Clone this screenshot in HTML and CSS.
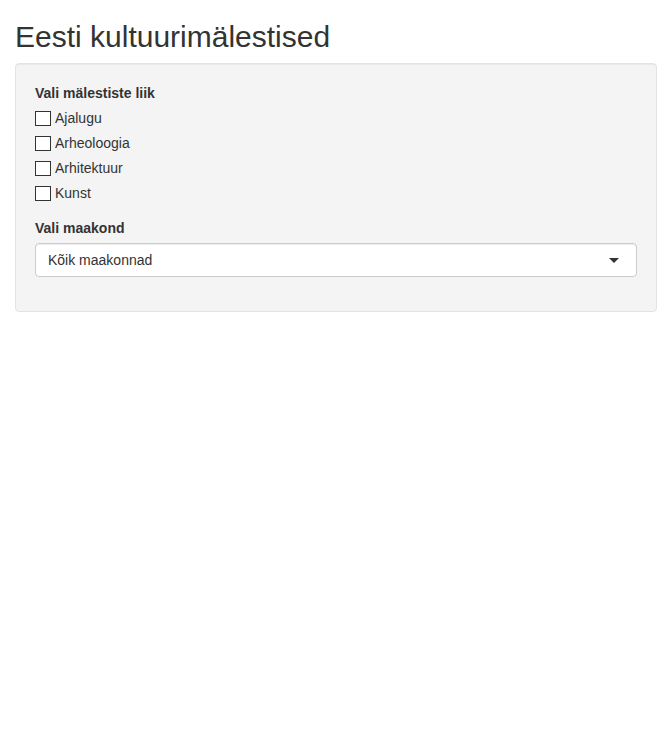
FILE: index.html
```html
<!DOCTYPE html>
<html lang="et">
<head>
<meta charset="utf-8">
<title>Eesti kultuurimälestised</title>
<link rel="stylesheet" href="styles.css">
</head>
<body>
<div class="container">
  <h2 class="title">Eesti kultuurimälestised</h2>
  <div class="well">
    <div class="form-group">
      <label class="control-label">Vali mälestiste liik</label>
      <div class="options">
        <label class="checkbox"><input type="checkbox"><span>Ajalugu</span></label>
        <label class="checkbox"><input type="checkbox"><span>Arheoloogia</span></label>
        <label class="checkbox"><input type="checkbox"><span>Arhitektuur</span></label>
        <label class="checkbox"><input type="checkbox"><span>Kunst</span></label>
      </div>
    </div>
    <div class="form-group">
      <label class="control-label">Vali maakond</label>
      <div class="select">
        <span class="select-value">Kõik maakonnad</span>
        <span class="caret"></span>
      </div>
    </div>
  </div>
</div>
</body>
</html>
```
FILE: styles.css
```css
* { box-sizing: border-box; }
html, body {
  margin: 0;
  padding: 0;
  background: #fff;
}
body {
  font-family: "Liberation Sans", Arial, Helvetica, sans-serif;
  font-size: 14px;
  line-height: 20px;
  color: #333;
}
.container {
  padding: 0 15px;
}
.title {
  font-size: 30px;
  font-weight: 500;
  line-height: 33px;
  margin: 20px 0 10px;
}
.well {
  background: #f4f4f4;
  border: 1px solid #e3e3e3;
  border-radius: 4px;
  box-shadow: inset 0 1px 1px rgba(0,0,0,.05);
  padding: 19px;
  display: flex;
  flex-direction: column;
  gap: 15px;
  margin-bottom: 20px;
}
.form-group {
  display: flex;
  flex-direction: column;
  gap: 5px;
}
.form-group:last-child {
  margin-bottom: 15px;
}
.control-label {
  font-weight: bold;
  height: 20px;
}
.options {
  display: flex;
  flex-direction: column;
  gap: 5px;
}
.checkbox {
  display: flex;
  align-items: flex-start;
  height: 20px;
  cursor: pointer;
}
.checkbox input {
  appearance: none;
  -webkit-appearance: none;
  width: 16px;
  height: 15px;
  margin: 3px 4px 0 0;
  border: 1px solid #333;
  background: #fff;
  flex: none;
}
.select {
  position: relative;
  height: 34px;
  border: 1px solid #ccc;
  border-radius: 4px;
  background: #fff;
  box-shadow: inset 0 1px 1px rgba(0,0,0,.075);
  padding: 6px 12px;
  display: flex;
  align-items: center;
}
.caret {
  position: absolute;
  right: 17px;
  top: 50%;
  margin-top: -2px;
  width: 0;
  height: 0;
  border-style: solid;
  border-width: 5px 5px 0 5px;
  border-color: #333 transparent transparent transparent;
}
```
